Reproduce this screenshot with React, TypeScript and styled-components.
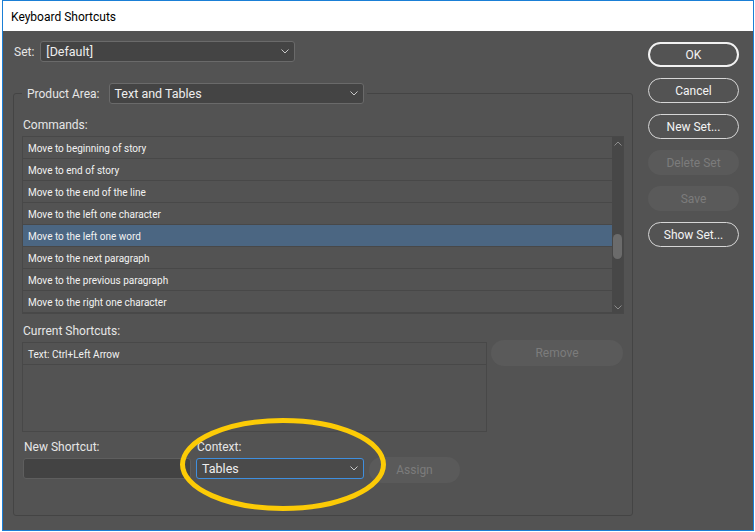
import React from "react";
import styled, { createGlobalStyle, css } from "styled-components";

const GlobalStyle = createGlobalStyle`
  html, body {
    margin: 0;
    padding: 0;
    background: #ffffff;
    font-family: Roboto, "Noto Sans", sans-serif;
  }
  * { box-sizing: border-box; }
`;

const Window = styled.div`
  width: 752px;
  height: 531px;
  margin-left: 2px;
  border: 1px solid #1a7fd6;
  display: flex;
  flex-direction: column;
  background: #535353;
`;

const TitleBar = styled.div`
  height: 30px;
  flex: none;
  background: #ffffff;
  color: #000000;
  font-size: 12px;
  display: flex;
  align-items: center;
  padding: 1px 0 0 8px;
`;

const Main = styled.div`
  flex: 1;
  display: flex;
  background: #535353;
  color: #e8e8e8;
  min-height: 0;
`;

const LeftColumn = styled.div`
  display: flex;
  flex-direction: column;
  padding: 10px 0 14px 10px;
  width: 630px;
`;

const SetRow = styled.div`
  display: flex;
  align-items: center;
  gap: 6px;
  padding-left: 1px;
`;

const Label = styled.span`
  font-size: 12px;
  line-height: 16px;
  color: #e6e6e6;
  white-space: nowrap;
`;

const Dropdown = styled.div<{ $width: number; $focused?: boolean }>`
  width: ${(p) => p.$width}px;
  height: 21px;
  display: flex;
  align-items: center;
  justify-content: space-between;
  padding: 0 5px 0 5px;
  border-radius: 3px;
  font-size: 12.5px;
  color: #eeeeee;
  background: ${(p) => (p.$focused ? "#4a4a4a" : "#444444")};
  border: 1px solid ${(p) => (p.$focused ? "#3f8fdf" : "#6a6a6a")};
`;

const Group = styled.fieldset`
  flex: 1;
  margin: 21px 0 0 0;
  width: 620px;
  padding: 13px 8px 0 8px;
  border: 1px solid #444444;
  border-radius: 3px;
  min-inline-size: 0;
`;

const Legend = styled.legend`
  padding: 0 3px 0 5px;
  display: flex;
  align-items: center;
  gap: 9px;
`;

const FieldLabel = styled(Label)<{ $gapTop?: number }>`
  display: block;
  padding-left: 1px;
  margin-top: ${(p) => p.$gapTop ?? 0}px;
`;

const CommandList = styled.div`
  margin-top: 3px;
  height: 178px;
  border: 1px solid #484848;
  display: flex;
`;

const Rows = styled.div`
  flex: 1;
  display: flex;
  flex-direction: column;
`;

const Row = styled.div<{ $selected?: boolean }>`
  height: 22px;
  flex: none;
  display: flex;
  align-items: center;
  padding: 1px 0 0 5px;
  font-size: 10px;
  color: #f2f2f2;
  border-bottom: 1px solid #484848;
  background: ${(p) => (p.$selected ? "#4b6682" : "transparent")};
`;

const Scrollbar = styled.div`
  width: 11px;
  flex: none;
  background: #474747;
  display: flex;
  flex-direction: column;
`;

const ScrollArrow = styled.div`
  height: 12px;
  flex: none;
  display: flex;
  align-items: center;
  justify-content: center;
`;

const Track = styled.div`
  flex: 1;
  position: relative;
`;

const Thumb = styled.div`
  position: absolute;
  left: 1px;
  width: 9px;
  height: 25px;
  border-radius: 5px;
  background: #6b6b6b;
`;

const ShortcutRow = styled.div`
  display: flex;
  align-items: flex-start;
  gap: 4px;
  margin-top: 1px;
`;

const ShortcutBox = styled.div`
  margin-top: 2px;
  width: 465px;
  height: 90px;
  border: 1px solid #484848;
`;

const pillBase = css`
  border-radius: 13px;
  font-family: Roboto, "Noto Sans", sans-serif;
  font-size: 12px;
  display: flex;
  align-items: center;
  justify-content: center;
  padding: 0;
`;

const PillButton = styled.button<{ $kind: "default" | "normal" | "disabled" }>`
  ${pillBase};
  width: 91px;
  height: 25px;
  flex: none;
  ${(p) =>
    p.$kind === "disabled"
      ? css`
          background: #5a5a5a;
          border: none;
          color: #7c7c7c;
        `
      : css`
          background: transparent;
          border: ${p.$kind === "default" ? "2px solid #f2f2f2" : "1px solid #d6d6d6"};
          color: #f4f4f4;
        `}
`;

const WideButton = styled(PillButton)`
  width: 132px;
  height: 26px;
`;

const AssignButton = styled(PillButton)`
  height: 26px;
  margin-top: -1px;
`;

const BottomGrid = styled.div`
  position: relative;
  margin-top: 7px;
  padding-left: 1px;
  display: grid;
  grid-template-columns: 168px 168px 91px;
  grid-template-rows: 16px auto;
  column-gap: 5px;
  row-gap: 3px;
  align-items: start;
`;

const TextInput = styled.div`
  height: 21px;
  border-radius: 3px;
  background: #434343;
  border: 1px solid #5e5e5e;
`;

const Highlight = styled.svg`
  position: absolute;
  left: 158px;
  top: -21px;
  pointer-events: none;
  overflow: visible;
`;

const ButtonColumn = styled.div`
  display: flex;
  flex-direction: column;
  gap: 11px;
  padding-top: 11px;
  margin-left: 15px;
`;

const Chevron = ({ up, color = "#c8c8c8" }: { up?: boolean; color?: string }) => (
  <svg width="8" height="5" viewBox="0 0 8 5">
    <path
      d={up ? "M0.5 4.5 L4 1 L7.5 4.5" : "M0.5 0.5 L4 4 L7.5 0.5"}
      stroke={color}
      strokeWidth="1"
      fill="none"
    />
  </svg>
);

const commands = [
  "Move to beginning of story",
  "Move to end of story",
  "Move to the end of the line",
  "Move to the left one character",
  "Move to the left one word",
  "Move to the next paragraph",
  "Move to the previous paragraph",
  "Move to the right one character",
];

const selectedIndex = 4;
const trackHeight = 152;
const thumbHeight = 25;
const scrollFraction = 0.67;

export default function App() {
  const thumbTop = Math.round(scrollFraction * (trackHeight - thumbHeight));
  return (
    <>
      <GlobalStyle />
      <Window>
        <TitleBar>Keyboard Shortcuts</TitleBar>
        <Main>
          <LeftColumn>
            <SetRow>
              <Label>Set:</Label>
              <Dropdown $width={255}>
                <span>[Default]</span>
                <Chevron />
              </Dropdown>
            </SetRow>
            <Group>
              <Legend>
                <Label>Product Area:</Label>
                <Dropdown $width={255}>
                  <span>Text and Tables</span>
                  <Chevron />
                </Dropdown>
              </Legend>
              <FieldLabel>Commands:</FieldLabel>
              <CommandList>
                <Rows>
                  {commands.map((c, i) => (
                    <Row key={c} $selected={i === selectedIndex}>
                      {c}
                    </Row>
                  ))}
                </Rows>
                <Scrollbar>
                  <ScrollArrow>
                    <Chevron up color="#8c8c8c" />
                  </ScrollArrow>
                  <Track>
                    <Thumb style={{ top: thumbTop }} />
                  </Track>
                  <ScrollArrow>
                    <Chevron color="#8c8c8c" />
                  </ScrollArrow>
                </Scrollbar>
              </CommandList>
              <FieldLabel $gapTop={9}>Current Shortcuts:</FieldLabel>
              <ShortcutRow>
                <ShortcutBox>
                  <Row>Text: Ctrl+Left Arrow</Row>
                </ShortcutBox>
                <WideButton $kind="disabled">Remove</WideButton>
              </ShortcutRow>
              <BottomGrid>
                <FieldLabel>New Shortcut:</FieldLabel>
                <FieldLabel>Context:</FieldLabel>
                <span />
                <TextInput />
                <Dropdown $width={168} $focused>
                  <span>Tables</span>
                  <Chevron />
                </Dropdown>
                <AssignButton $kind="disabled">Assign</AssignButton>
                <Highlight width="206" height="93" viewBox="0 0 206 93">
                  <ellipse
                    cx="103"
                    cy="46.5"
                    rx="100.5"
                    ry="44"
                    fill="none"
                    stroke="#fccb06"
                    strokeWidth="5"
                  />
                </Highlight>
              </BottomGrid>
            </Group>
          </LeftColumn>
          <ButtonColumn>
            <PillButton $kind="default">OK</PillButton>
            <PillButton $kind="normal">Cancel</PillButton>
            <PillButton $kind="normal">New Set...</PillButton>
            <PillButton $kind="disabled">Delete Set</PillButton>
            <PillButton $kind="disabled">Save</PillButton>
            <PillButton $kind="normal">Show Set...</PillButton>
          </ButtonColumn>
        </Main>
      </Window>
    </>
  );
}
